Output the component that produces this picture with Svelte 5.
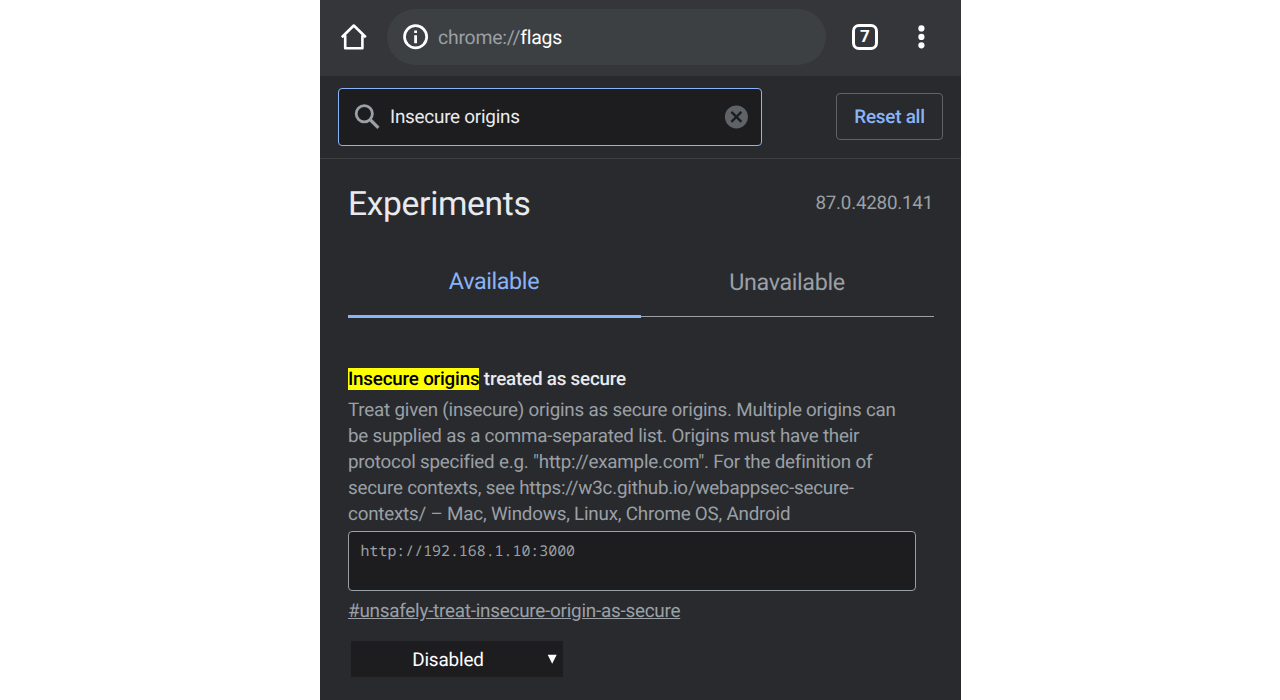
<script>
  let query = $state('Insecure origins');
  let origin = $state('http://192.168.1.10:3000');
</script>

<main class="phone">
  <header class="toolbar">
    <svg class="home" width="28" height="28" viewBox="0 0 28 28" fill="none" stroke="#fff" stroke-width="2.6" stroke-linejoin="round">
      <path d="M1.8 14.2 13.8 2.5 25.8 14.2M5.2 12.2V25.3H22.4V12.2" />
    </svg>
    <div class="omnibox">
      <svg width="26" height="26" viewBox="0 0 26 26">
        <circle cx="12.6" cy="12.8" r="11.1" fill="none" stroke="#fff" stroke-width="2.7" />
        <path d="M11.2 6.4h2.8v2.7h-2.8zM11.2 11.2h2.8v8h-2.8z" fill="#fff" />
      </svg>
      <span class="url">chrome://<b>flags</b></span>
    </div>
    <div class="count">7</div>
    <svg class="more" width="8" height="26" viewBox="0 0 8 26" fill="#fff">
      <circle cx="4.4" cy="4.4" r="3.1" /><circle cx="4.4" cy="12.9" r="3.1" /><circle cx="4.4" cy="21.3" r="3.1" />
    </svg>
  </header>

  <section class="searchbar">
    <div class="field">
      <svg width="26" height="26" viewBox="0 0 26 26" fill="none" stroke="#9aa0a6" stroke-width="2.8">
        <circle cx="10.3" cy="9.8" r="8.1" /><path d="M16 15.5 24.4 23.9" stroke-width="3.2" />
      </svg>
      <span class="query">{query}</span>
      <svg width="24" height="24" viewBox="0 0 24 24">
        <circle cx="12.4" cy="11.9" r="11.5" fill="#5f6368" />
        <path d="M7.4 6.9 17.4 16.9M17.4 6.9 7.4 16.9" stroke="#1d1d1f" stroke-width="2.3" />
      </svg>
    </div>
    <button class="reset">Reset all</button>
  </section>

  <section class="content">
    <div class="heading">
      <h1>Experiments</h1>
      <span class="version">87.0.4280.141</span>
    </div>
    <nav class="tabs">
      <div class="tab active"><span>Available</span></div>
      <div class="tab"><span>Unavailable</span></div>
    </nav>
    <article>
      <h2><mark>Insecure origins</mark> treated as secure</h2>
      <p>
        <span>Treat given (insecure) origins as secure origins. Multiple origins can</span>
        <span>be supplied as a comma-separated list. Origins must have their</span>
        <span>protocol specified e.g. "http://example.com". For the definition of</span>
        <span>secure contexts, see https://w3c.github.io/webappsec-secure-</span>
        <span>contexts/ – Mac, Windows, Linux, Chrome OS, Android</span>
      </p>
      <div class="origin">{origin}</div>
      <div class="permalink">#unsafely-treat-insecure-origin-as-secure</div>
      <div class="select">
        <span>Disabled</span>
        <svg width="10" height="10" viewBox="0 0 10 10"><path d="M.7.8h9L5.2 9.8z" fill="#fff" /></svg>
      </div>
    </article>
  </section>
</main>

<style>
  :global(body) { background: #fff; overflow: hidden; }
  * { box-sizing: border-box; }
  .phone {
    width: 641px; height: 700px; margin-left: 320px; overflow: hidden;
    background: #292a2d; color: #e8eaed; font-family: Roboto, sans-serif;
    text-rendering: geometricPrecision;
  }
  .toolbar { display: flex; align-items: center; height: 76px; padding: 0 36px 2px 20px; background: #35363a; }
  .home { flex: none; }
  .omnibox {
    display: flex; align-items: center; gap: 9px; width: 439px; height: 56px; margin-left: 19px;
    padding-left: 16px; border-radius: 28px; background: #3c4043;
  }
  .url { padding-top: 1px; font-size: 19.4px; letter-spacing: -.21px; line-height: 24px; color: #9aa0a6; white-space: nowrap; }
  .url b { font-weight: 400; color: #fff; }
  .count {
    width: 26px; height: 26px; margin-left: 26px; border: 3px solid #fff; border-radius: 7px;
    font-size: 17px; font-weight: 700; line-height: 21px; text-align: center; color: #fff;
  }
  .more { margin-left: auto; }
  .searchbar {
    display: flex; align-items: flex-start; justify-content: space-between; height: 83px;
    padding: 12px 18px 0; border-bottom: 1px solid #3f4043;
  }
  .field {
    display: flex; align-items: center; width: 424px; height: 58px; padding: 0 13px 0 15px;
    border: 1px solid #8ab4f8; border-radius: 4px; background: #1d1d1f;
  }
  .query { flex: 1; margin-left: 10px; font-size: 18.9px; letter-spacing: -.25px; line-height: 24px; }
  .reset {
    width: 107px; height: 47px; margin-top: 5px; padding: 0; border: 1px solid #5f6368; border-radius: 4px; background: none;
    font: 500 18.9px Roboto, sans-serif; letter-spacing: -.25px; color: #8ab4f8; text-rendering: inherit;
  }
  .content { padding: 0 27px 0 28px; }
  .heading { display: flex; align-items: center; justify-content: space-between; height: 89px; }
  h1 { margin: 0; padding-top: 2px; font-size: 33.6px; letter-spacing: -.33px; font-weight: 400; }
  .version { padding: 0 1px 2px 0; font-size: 18.8px; letter-spacing: -.22px; color: #9aa0a6; }
  .tabs { display: flex; align-items: flex-start; height: 70px; }
  .tab {
    flex: 1; height: 69px; padding: 20px 1px 0 0; border-bottom: 1px solid #9aa0a6;
    font-size: 23.3px; letter-spacing: -.36px; line-height: 28px; text-align: center; color: #9aa0a6;
  }
  .tab.active { height: 70px; padding-top: 19px; border-bottom: 3px solid #8ab4f8; color: #8ab4f8; }
  article { padding-top: 50px; }
  h2 { margin: 0; font-size: 18.8px; letter-spacing: -.2px; font-weight: 500; line-height: 22px; }
  mark { background: #ff0; color: #000; }
  p { display: flex; flex-direction: column; margin: 7px 0 4px; font-size: 18.8px; letter-spacing: -.205px; line-height: 26.1px; color: #9aa0a6; }
  p span { white-space: nowrap; }
  .origin {
    width: 568px; height: 60px; padding: 8px 11.6px; border: 1px solid #9aa0a6; border-radius: 4px; background: #1d1d1f;
    font: 14.9px/22px "Droid Sans Mono", "Noto Sans Mono", "Noto Sans Mono CJK SC", "DejaVu Sans Mono", monospace; color: #9aa0a6;
  }
  .permalink { width: max-content; margin-top: 8px; font-size: 18.9px; letter-spacing: -.25px; line-height: 24px; color: #9aa0a6; text-decoration: underline; }
  .select {
    display: flex; align-items: center; width: 212px; height: 36px; margin: 18px 0 0 3px; padding-right: 6px;
    background: #1d1d1f; font-size: 18.9px; letter-spacing: -.15px; color: #fff;
  }
  .select span { flex: 1; padding-right: 2px; text-align: center; }
</style>
